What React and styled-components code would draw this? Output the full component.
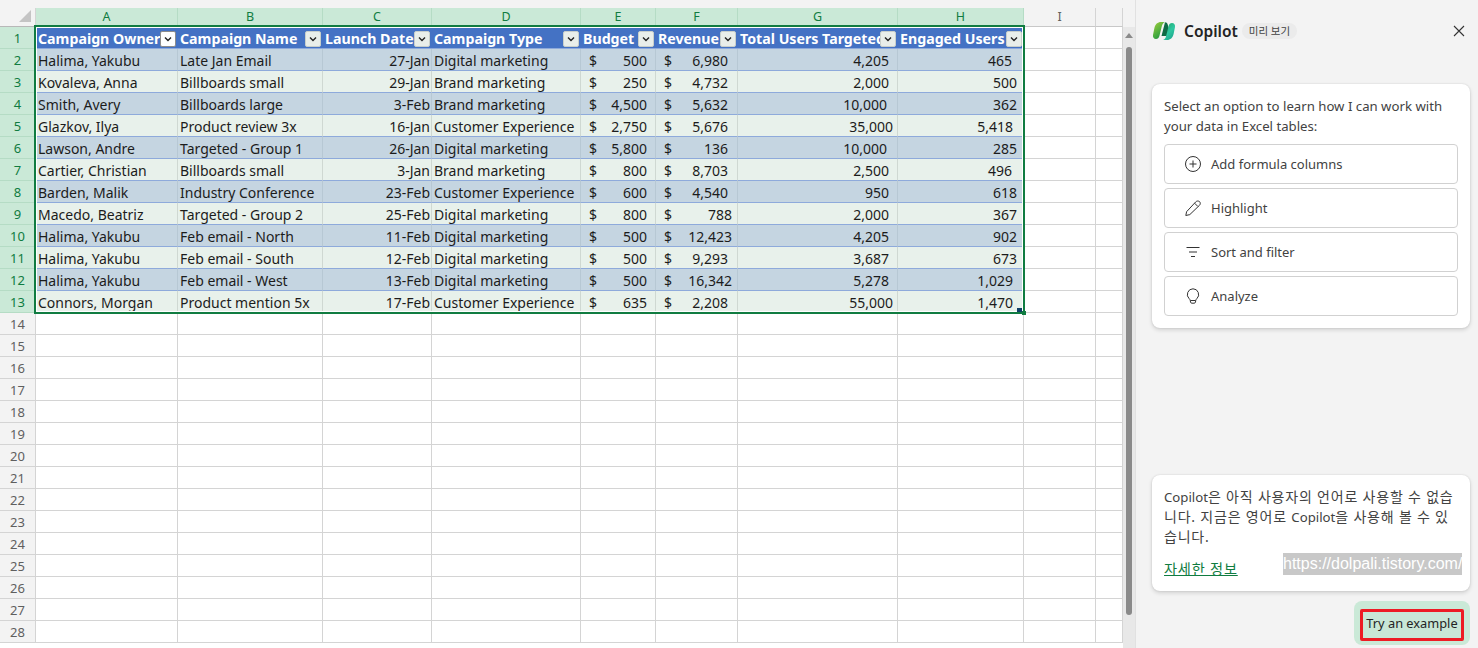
import styled, { createGlobalStyle } from 'styled-components';

const GlobalStyle = createGlobalStyle`
  html, body {
    margin: 0;
    padding: 0;
    height: 648px;
    overflow: hidden;
    background: #f3f3f3;
  }
`;

const SHEET_FONT = `'Noto Sans', 'Noto Sans CJK KR', sans-serif`;
const PANEL_FONT = `'Noto Sans', 'Noto Sans CJK KR', sans-serif`;
const COLS = '36px 142px 145px 109px 149px 75px 82px 160px 126px 72px 27px';

const columns = ['A', 'B', 'C', 'D', 'E', 'F', 'G', 'H', 'I', ''];

const headers = [
  'Campaign Owner',
  'Campaign Name',
  'Launch Date',
  'Campaign Type',
  'Budget',
  'Revenue',
  'Total Users Targeted',
  'Engaged Users',
];

// owner, name, date, type, budget, revenue (+ its right padding), users, engaged
const rows = [
  ['Halima, Yakubu', 'Late Jan Email', '27-Jan', 'Digital marketing', '500', '6,980', 9, '4,205', 8, '465', 11],
  ['Kovaleva, Anna', 'Billboards small', '29-Jan', 'Brand marketing', '250', '4,732', 9, '2,000', 8, '500', 6],
  ['Smith, Avery', 'Billboards large', '3-Feb', 'Brand marketing', '4,500', '5,632', 9, '10,000', 10, '362', 6],
  ['Glazkov, Ilya', 'Product review 3x', '16-Jan', 'Customer Experience', '2,750', '5,676', 9, '35,000', 4, '5,418', 10],
  ['Lawson, Andre', 'Targeted - Group 1', '26-Jan', 'Digital marketing', '5,800', '136', 9, '10,000', 10, '285', 6],
  ['Cartier, Christian', 'Billboards small', '3-Jan', 'Brand marketing', '800', '8,703', 9, '2,500', 8, '496', 11],
  ['Barden, Malik', 'Industry Conference', '23-Feb', 'Customer Experience', '600', '4,540', 9, '950', 8, '618', 6],
  ['Macedo, Beatriz', 'Targeted - Group 2', '25-Feb', 'Digital marketing', '800', '788', 5, '2,000', 8, '367', 6],
  ['Halima, Yakubu', 'Feb email - North', '11-Feb', 'Digital marketing', '500', '12,423', 5, '4,205', 8, '902', 6],
  ['Halima, Yakubu', 'Feb email - South', '12-Feb', 'Digital marketing', '500', '9,293', 9, '3,687', 8, '673', 6],
  ['Halima, Yakubu', 'Feb email - West', '13-Feb', 'Digital marketing', '500', '16,342', 5, '5,278', 8, '1,029', 10],
  ['Connors, Morgan', 'Product mention 5x', '17-Feb', 'Customer Experience', '635', '2,208', 9, '55,000', 4, '1,470', 10],
];

const Page = styled.div`
  display: flex;
  width: 1478px;
  height: 648px;
  overflow: hidden;
  background: #f3f3f3;
`;

const SheetArea = styled.div`
  position: relative;
  width: 1136px;
  height: 648px;
  flex: none;
  padding-top: 8px;
  box-sizing: border-box;
  border-right: 1px solid #e1e1e1;
  font-family: ${SHEET_FONT};
`;

const ColumnBar = styled.div`
  display: grid;
  grid-template-columns: ${COLS};
  height: 19px;
`;

const Corner = styled.div`
  position: relative;
  background: #f3f3f3;
  border-right: 1px solid #d4d4d4;
  border-bottom: 1px solid #b8b8b8;
  box-sizing: border-box;
  &::after {
    content: '';
    position: absolute;
    right: 4px;
    bottom: 4px;
    border-style: solid;
    border-width: 0 0 12px 12px;
    border-color: transparent transparent #c4c4c4 transparent;
  }
`;

const ColumnLabel = styled.div`
  display: flex;
  align-items: center;
  justify-content: center;
  box-sizing: border-box;
  font-size: 12.5px;
  line-height: 18px;
  color: ${(p) => (p.$active ? '#107c41' : '#5f5f5f')};
  background: ${(p) => (p.$active ? '#cae9d7' : '#f3f3f3')};
  border-right: 1px solid ${(p) => (p.$active ? '#b5dcc5' : '#d4d4d4')};
  border-bottom: 1px solid ${(p) => (p.$active ? '#107c41' : '#c8c8c8')};
`;

const GridBody = styled.div`
  height: 621px;
  width: 1123px;
  overflow: hidden;
  background: #fff;
`;

const Row = styled.div`
  display: grid;
  grid-template-columns: ${COLS};
  height: 22px;
`;

const RowLabel = styled.div`
  display: flex;
  align-items: center;
  justify-content: center;
  box-sizing: border-box;
  padding-top: 1px;
  font-size: 13px;
  color: ${(p) => (p.$active ? '#107c41' : '#5f5f5f')};
  background: ${(p) => (p.$active ? '#cae9d7' : '#f3f3f3')};
  border-right: 1px solid ${(p) => (p.$active ? '#107c41' : '#d4d4d4')};
  border-bottom: 1px solid ${(p) => (p.$active ? '#b5dcc5' : '#d4d4d4')};
`;

const EmptyCell = styled.div`
  box-sizing: border-box;
  background: #fff;
  border-right: 1px solid #d4d4d4;
  border-bottom: 1px solid #d4d4d4;
`;

const HeaderCell = styled.div`
  position: relative;
  box-sizing: border-box;
  overflow: hidden;
  padding: 1px 0 0 2px;
  background: #4472c4;
  color: #fff;
  font-size: 14.2px;
  font-weight: 700;
  line-height: 22px;
  white-space: nowrap;
  border-bottom: 1px solid #8eaadb;
`;

const FilterButton = styled.span`
  position: absolute;
  top: 4px;
  right: 2px;
  width: 16px;
  height: 16px;
  box-sizing: border-box;
  display: flex;
  align-items: center;
  justify-content: center;
  border-radius: 2px;
  border: 1px solid ${(p) => (p.$selected ? '#8c8c8c' : '#c8cfcb')};
  background: ${(p) => (p.$selected ? '#ffffff' : '#e9eeea')};
`;

const DataCell = styled.div`
  position: relative;
  display: flex;
  justify-content: ${(p) => (p.$right ? 'flex-end' : 'flex-start')};
  box-sizing: border-box;
  overflow: hidden;
  padding: ${(p) => (p.$right ? `1px ${p.$pad ?? 2}px 0 0` : '1px 0 0 2px')};
  background: ${(p) => (p.$band ? '#c5d5e1' : '#e8f1eb')};
  color: #1c1c1c;
  font-size: 14px;
  line-height: 22px;
  white-space: nowrap;
  border-bottom: 1px solid #8eaadb;
  border-right: 1px solid ${(p) => (p.$band ? '#b7c8d4' : '#cfd8d2')};
`;

const Currency = styled.span`
  position: absolute;
  left: 8px;
  top: 1px;
`;

const Selection = styled.div`
  position: absolute;
  left: 34px;
  top: 25px;
  width: 991px;
  height: 289px;
  box-sizing: border-box;
  border: 2px solid #107c41;
  box-shadow: inset 0 0 0 1px #fff;
  pointer-events: none;
  &::before {
    content: '';
    position: absolute;
    right: 1px;
    bottom: 0;
    width: 5px;
    height: 4px;
    background: #0f3f66;
  }
  &::after {
    content: '';
    position: absolute;
    right: -3px;
    bottom: -3px;
    width: 4px;
    height: 4px;
    background: #107c41;
  }
`;

const Scrollbar = styled.div`
  position: absolute;
  left: 1123px;
  top: 27px;
  width: 12px;
  bottom: 0;
  background: #e8e8e8;
`;

const ScrollArrow = styled.div`
  position: absolute;
  left: 2px;
  top: 6px;
  border-style: solid;
  border-width: 0 4px 5px 4px;
  border-color: transparent transparent #8a8a8a transparent;
`;

const ScrollThumb = styled.div`
  position: absolute;
  left: 3px;
  top: 20px;
  width: 6px;
  height: 568px;
  border-radius: 3px;
  background: #8a8a8a;
`;

const Panel = styled.aside`
  flex: 1;
  height: 648px;
  display: flex;
  flex-direction: column;
  box-sizing: border-box;
  padding: 0 8px 3px 16px;
  color: #424242;
  font-family: ${PANEL_FONT};
`;

const PanelHeader = styled.header`
  display: flex;
  align-items: center;
  height: 62px;
  margin-bottom: 22px;
`;

const PanelTitle = styled.span`
  margin-left: 8px;
  font-size: 15.5px;
  font-weight: 600;
  color: #242424;
`;

const PreviewBadge = styled.span`
  margin-left: 4px;
  padding: 0 7px;
  height: 16px;
  line-height: 16px;
  border-radius: 8px;
  background: #ebebeb;
  font-size: 10.5px;
  color: #424242;
`;

const CloseButton = styled.button`
  margin-left: auto;
  margin-right: 5px;
  padding: 0;
  border: 0;
  background: none;
  display: flex;
`;

const Card = styled.section`
  position: relative;
  box-sizing: border-box;
  padding: 12px;
  background: #fff;
  border-radius: 8px;
  box-shadow: 0 0 2px rgba(0, 0, 0, 0.12), 0 2px 4px rgba(0, 0, 0, 0.14);
  font-size: 13.2px;
  line-height: 20px;
`;

const OptionList = styled.div`
  display: flex;
  flex-direction: column;
  gap: 4px;
  margin-top: 8px;
`;

const Option = styled.div`
  display: flex;
  align-items: center;
  gap: 10px;
  height: 40px;
  box-sizing: border-box;
  padding-left: 20px;
  border: 1px solid #d1d1d1;
  border-radius: 4px;
  background: #fff;
  color: #424242;
  font-size: 13px;
`;

const NoticeCard = styled(Card)`
  margin-top: auto;
  height: 116px;
  padding-top: 12px;
  font-size: 14px;
  letter-spacing: 0.8px;
  white-space: nowrap;
`;

const Latin = styled.span`
  font-size: 13.2px;
  letter-spacing: 0;
`;

const MoreLink = styled.a`
  display: block;
  margin-top: 12px;
  color: #107c41;
  text-decoration: underline;
  font-size: 14.2px;
  line-height: 20px;
`;

const Watermark = styled.span`
  position: absolute;
  left: 131px;
  top: 78px;
  width: 179px;
  height: 22px;
  background: #c8c8c8;
  color: #fff;
  font-family: 'Liberation Sans', sans-serif;
  font-size: 16px;
  letter-spacing: 0;
  line-height: 22px;
  white-space: nowrap;
`;

const FooterRow = styled.div`
  display: flex;
  justify-content: flex-end;
  margin-top: 10px;
`;

const ExampleHalo = styled.div`
  padding: 8px 6px 4px;
  background: #cae9d7;
  border-radius: 8px;
  height: 44px;
  box-sizing: border-box;
`;

const ExampleButton = styled.button`
  display: block;
  width: 104px;
  height: 32px;
  padding: 0 0 4px;
  box-sizing: border-box;
  border: 3px solid #ed1c24;
  border-radius: 2px;
  background: #c9e7d6;
  color: #242424;
  font-family: ${PANEL_FONT};
  font-size: 12.8px;
  white-space: nowrap;
`;

const Chevron = () => (
  <svg width="10" height="10" viewBox="0 0 10 10" fill="none">
    <path d="M2 3.5 5 6.5 8 3.5" stroke="#222" strokeWidth="1.4" />
  </svg>
);

const CopilotLogo = () => (
  <svg width="24" height="22" viewBox="0 0 24 22">
    <defs>
      <linearGradient id="cpA" x1="0.1" y1="0" x2="0.7" y2="1">
        <stop offset="0" stopColor="#9ccb3c" />
        <stop offset="0.7" stopColor="#3fa83f" />
        <stop offset="1" stopColor="#1d8a45" />
      </linearGradient>
      <linearGradient id="cpB" x1="0.2" y1="0" x2="0.9" y2="1">
        <stop offset="0" stopColor="#1fa66b" />
        <stop offset="0.5" stopColor="#2fc7a0" />
        <stop offset="1" stopColor="#17a08a" />
      </linearGradient>
    </defs>
    <path d="M9 2h4c-1.6.6-2.5 1.9-3 3.6L7.400 16C6.900 18 5.700 19 4 19 1.800 19 .6 17.300 1 15L2.400 8C3.200 4.200 5.700 2 9 2Z" fill="url(#cpA)" />
    <path d="M13 2.200c1.300 0 2.300.9 2.700 2.300L19 16H9.500L13 2.200Z" fill="#0f6b45" />
    <path d="M15 20h-4c1.600-.6 2.500-1.900 3-3.600L16.600 6C17.100 4 18.300 3 20 3c2.200 0 3.400 1.700 3 4l-1.400 7c-.8 3.800-3.300 6-6.600 6Z" fill="url(#cpB)" />
  </svg>
);

const CloseIcon = () => (
  <svg width="12" height="12" viewBox="0 0 12 12" fill="none">
    <path d="M1 1 11 11M11 1 1 11" stroke="#333" strokeWidth="1.1" />
  </svg>
);

const PlusIcon = () => (
  <svg width="16" height="16" viewBox="0 0 16 16" fill="none" stroke="#333" strokeWidth="1">
    <circle cx="8" cy="8" r="7.5" />
    <path d="M8 4.500v7M4.500 8h7" />
  </svg>
);

const PenIcon = () => (
  <svg width="16" height="16" viewBox="0 0 16 16" fill="none" stroke="#333" strokeWidth="1">
    <path d="M.8 15.500l.8-3.800L10.600 2c1.100-1.200 2.900-1.300 4-.3 1 1 .9 2.600-.2 3.700L4.800 14.600.8 15.500Z" />
    <path d="M9.600 3.200l3.200 3.200" />
  </svg>
);

const FilterIcon = () => (
  <svg width="16" height="16" viewBox="0 0 16 16" fill="none" stroke="#333" strokeWidth="1">
    <path d="M1.500 3.500h13M4 8h8M6 12.500h4" />
  </svg>
);

const BulbIcon = () => (
  <svg width="16" height="16" viewBox="0 0 16 16" fill="none" stroke="#333" strokeWidth="1">
    <path d="M8 .8a5.700 5.700 0 0 0-3.800 9.900c.6.6 1 1.200 1.100 2l.2 1.300c.1.7.6 1.200 1.300 1.200h2.400c.7 0 1.200-.5 1.300-1.200l.2-1.300c.1-.8.5-1.400 1.100-2A5.700 5.700 0 0 0 8 .8Z" />
    <path d="M5.400 12.500h5.200" />
  </svg>
);

const options = [
  ['Add formula columns', <PlusIcon key="plus" />],
  ['Highlight', <PenIcon key="pen" />],
  ['Sort and filter', <FilterIcon key="filter" />],
  ['Analyze', <BulbIcon key="bulb" />],
];

const App = () => {
  const emptyRows = Array.from({ length: 15 }, (_, i) => i + 14);
  return (
    <Page>
      <GlobalStyle />
      <SheetArea>
        <ColumnBar>
          <Corner />
          {columns.map((c, i) => (
            <ColumnLabel key={c || 'blank'} $active={i < 8}>{c}</ColumnLabel>
          ))}
        </ColumnBar>
        <GridBody>
          <Row>
            <RowLabel $active>1</RowLabel>
            {headers.map((h, i) => (
              <HeaderCell key={h}>
                {h}
                <FilterButton $selected={i === 0}><Chevron /></FilterButton>
              </HeaderCell>
            ))}
            <EmptyCell />
            <EmptyCell />
          </Row>
          {rows.map((r, i) => {
            const band = i % 2 === 0;
            return (
              <Row key={i}>
                <RowLabel $active>{i + 2}</RowLabel>
                <DataCell $band={band}>{r[0]}</DataCell>
                <DataCell $band={band}>{r[1]}</DataCell>
                <DataCell $band={band} $right $pad={1}>{r[2]}</DataCell>
                <DataCell $band={band}>{r[3]}</DataCell>
                <DataCell $band={band} $right $pad={8}><Currency>$</Currency>{r[4]}</DataCell>
                <DataCell $band={band} $right $pad={r[6]}><Currency>$</Currency>{r[5]}</DataCell>
                <DataCell $band={band} $right $pad={r[8]}>{r[7]}</DataCell>
                <DataCell $band={band} $right $pad={r[10]}>{r[9]}</DataCell>
                <EmptyCell />
                <EmptyCell />
              </Row>
            );
          })}
          {emptyRows.map((n) => (
            <Row key={n}>
              <RowLabel>{n}</RowLabel>
              {Array.from({ length: 10 }, (_, i) => <EmptyCell key={i} />)}
            </Row>
          ))}
        </GridBody>
        <Selection />
        <Scrollbar>
          <ScrollArrow />
          <ScrollThumb />
        </Scrollbar>
      </SheetArea>
      <Panel>
        <PanelHeader>
          <CopilotLogo />
          <PanelTitle>Copilot</PanelTitle>
          <PreviewBadge>미리 보기</PreviewBadge>
          <CloseButton><CloseIcon /></CloseButton>
        </PanelHeader>
        <Card>
          Select an option to learn how I can work with your data in Excel tables:
          <OptionList>
            {options.map(([label, icon]) => (
              <Option key={label}>{icon}{label}</Option>
            ))}
          </OptionList>
        </Card>
        <NoticeCard>
          <Latin>Copilot</Latin>은 아직 사용자의 언어로 사용할 수 없습<br />
          니다. 지금은 영어로 <Latin>Copilot</Latin>을 사용해 볼 수 있<br />
          습니다.
          <MoreLink>자세한 정보</MoreLink>
          <Watermark>https://dolpali.tistory.com/</Watermark>
        </NoticeCard>
        <FooterRow>
          <ExampleHalo>
            <ExampleButton>Try an example</ExampleButton>
          </ExampleHalo>
        </FooterRow>
      </Panel>
    </Page>
  );
};

export default App;
